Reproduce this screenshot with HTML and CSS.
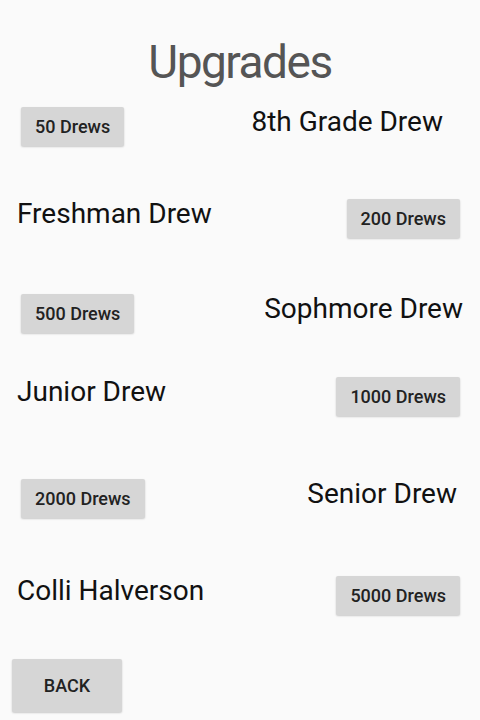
FILE: index.html
```html
<!DOCTYPE html>
<html lang="en">
<head>
    <meta charset="UTF-8">
    <meta name="viewport" content="width=device-width, initial-scale=1.0">
    <title>Upgrades</title>
    <link rel="stylesheet" href="styles.css">
</head>
<body>
    <h1 class="title">Upgrades</h1>

    <div class="upgrades">
        <div class="row row-1">
            <button class="buy">50 Drews</button>
            <span class="name name-8th">8th Grade Drew</span>
        </div>
        <div class="row row-2">
            <span class="name">Freshman Drew</span>
            <button class="buy">200 Drews</button>
        </div>
        <div class="row row-3">
            <button class="buy">500 Drews</button>
            <span class="name name-soph">Sophmore Drew</span>
        </div>
        <div class="row row-4">
            <span class="name">Junior Drew</span>
            <button class="buy">1000 Drews</button>
        </div>
        <div class="row row-5">
            <button class="buy">2000 Drews</button>
            <span class="name name-senior">Senior Drew</span>
        </div>
        <div class="row row-6">
            <span class="name">Colli Halverson</span>
            <button class="buy">5000 Drews</button>
        </div>
    </div>

    <button class="back">BACK</button>
</body>
</html>
```

FILE: styles.css
```css
body {
    margin: 0;
    height: 720px;
    background: #fafafa;
    font-family: Roboto, "Noto Sans", sans-serif;
    color: #111;
    display: flex;
    flex-direction: column;
    overflow: hidden;
}

.title {
    margin: 35px 0 0;
    text-align: center;
    font-size: 46px;
    font-weight: 400;
    line-height: 54px;
    letter-spacing: -1.5px;
    color: #555;
}

.upgrades {
    display: flex;
    flex-direction: column;
    padding: 0 20px 0 17px;
}

.row {
    display: flex;
    justify-content: space-between;
    align-items: flex-start;
}

.row-1 { margin-top: 16px; }
.row-2 { margin-top: 51px; }
.row-3 { margin-top: 54px; }
.row-4 { margin-top: 42px; }
.row-5 { margin-top: 61px; }
.row-6 { margin-top: 56px; }

.name {
    font-size: 28px;
    line-height: 33px;
    color: #111;
}

.name-8th { margin-right: 17px; }
.name-soph { margin-right: -3px; }
.name-senior { margin-right: 3px; }

.buy {
    margin-top: 2px;
    height: 39px;
    padding: 0 14px;
    border: none;
    border-radius: 2px;
    background: #d6d6d6;
    box-shadow: 0 1px 2px rgba(0, 0, 0, 0.2);
    font-family: Roboto, "Noto Sans", sans-serif;
    font-size: 18px;
    font-weight: 500;
    color: #222;
}

.row-1 .buy,
.row-3 .buy,
.row-5 .buy {
    margin-left: 4px;
}

.back {
    margin: auto 0 8px 12px;
    width: 110px;
    height: 53px;
    border: none;
    border-radius: 2px;
    background: #d6d6d6;
    box-shadow: 0 1px 2px rgba(0, 0, 0, 0.2);
    font-family: Roboto, "Noto Sans", sans-serif;
    font-size: 18px;
    font-weight: 500;
    color: #222;
}
```
